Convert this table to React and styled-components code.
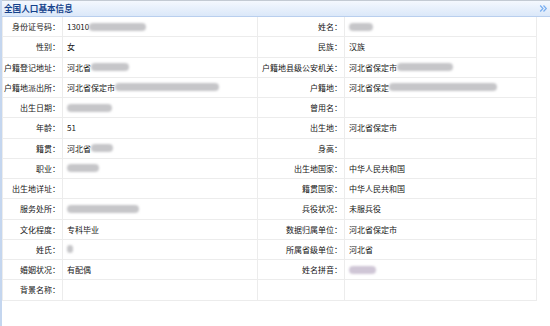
import React from "react";
import styled, { createGlobalStyle } from "styled-components";

const Global = createGlobalStyle`
  html, body { margin: 0; padding: 0; background: #fff; }
  body { font-family: "Noto Sans CJK SC", "Liberation Sans", sans-serif; }
`;

const Panel = styled.div`
  width: 550px;
  height: 326px;
  box-sizing: border-box;
  border-left: 2px solid #c4d6ef;
  background: #fff;
  display: flex;
  flex-direction: column;
`;

const Header = styled.div`
  height: 17px;
  box-sizing: border-box;
  border-top: 1px solid #c3cad3;
  border-bottom: 1px solid #b9cfee;
  background: linear-gradient(#f4f8fe, #dbe8f9);
  display: flex;
  align-items: center;
  justify-content: space-between;
  padding: 0 2px 0 2px;
`;

const Title = styled.span`
  font-size: 8.6px;
  font-weight: bold;
  color: #15428b;
  line-height: 1;
`;

const Grid = styled.div`
  display: grid;
  grid-template-columns: 60px 195px 87px 192px;
  grid-auto-rows: 20.25px;
  border-left: 1px solid #ececec;
  width: max-content;
`;

const Cell = styled.div`
  box-sizing: border-box;
  border-right: 1px solid #ececec;
  border-bottom: 1px solid #ececec;
  display: flex;
  align-items: center;
  font-size: 8px;
  color: #151515;
  white-space: nowrap;
  overflow: hidden;
  justify-content: ${(p) => (p.$label ? "flex-end" : "flex-start")};
  padding: ${(p) => (p.$label ? "0 2px 0 0" : "0 0 0 4px")};
`;

const Blur = styled.span`
  display: inline-block;
  width: ${(p) => p.$w}px;
  height: 8px;
  border-radius: 4px;
  background: ${(p) => p.$c || "#c6c6c9"};
  filter: blur(1.2px);
`;

const Chevron = () => (
  <svg width="9" height="9" viewBox="0 0 9 9">
    <path d="M1.2 1.5 L4 4.5 L1.2 7.5 M4.5 1.5 L7.3 4.5 L4.5 7.5" fill="none" stroke="#79aef0" strokeWidth="1.2" />
  </svg>
);

const rows = [
  ["身份证号码：", <>13010<Blur $w={57} /></>, "姓名：", <Blur $w={24} />],
  ["性别：", "女", "民族：", "汉族"],
  ["户籍登记地址：", <>河北省<Blur $w={38} /></>, "户籍地县级公安机关：", <>河北省保定市<Blur $w={56} /></>],
  ["户籍地派出所：", <>河北省保定市<Blur $w={104} /></>, "户籍地：", <>河北省保定<Blur $w={108} /></>],
  ["出生日期：", <Blur $w={45} />, "曾用名：", ""],
  ["年龄：", "51", "出生地：", "河北省保定市"],
  ["籍贯：", <>河北省<Blur $w={22} /></>, "身高：", ""],
  ["职业：", <Blur $w={32} />, "出生地国家：", "中华人民共和国"],
  ["出生地详址：", "", "籍贯国家：", "中华人民共和国"],
  ["服务处所：", <Blur $w={72} />, "兵役状况：", "未服兵役"],
  ["文化程度：", "专科毕业", "数据归属单位：", "河北省保定市"],
  ["姓氏：", <Blur $w={6} />, "所属省级单位：", "河北省"],
  ["婚姻状况：", "有配偶", "姓名拼音：", <Blur $w={27} $c="#cfc6d6" />],
  ["背景名称：", "", "", ""],
];

export default function App() {
  return (
    <>
      <Global />
      <Panel>
        <Header>
          <Title>全国人口基本信息</Title>
          <Chevron />
        </Header>
        <Grid>
          {rows.map((r, i) => (
            <React.Fragment key={i}>
              <Cell $label>{r[0]}</Cell>
              <Cell>{r[1]}</Cell>
              <Cell $label>{r[2]}</Cell>
              <Cell>{r[3]}</Cell>
            </React.Fragment>
          ))}
        </Grid>
      </Panel>
    </>
  );
}
